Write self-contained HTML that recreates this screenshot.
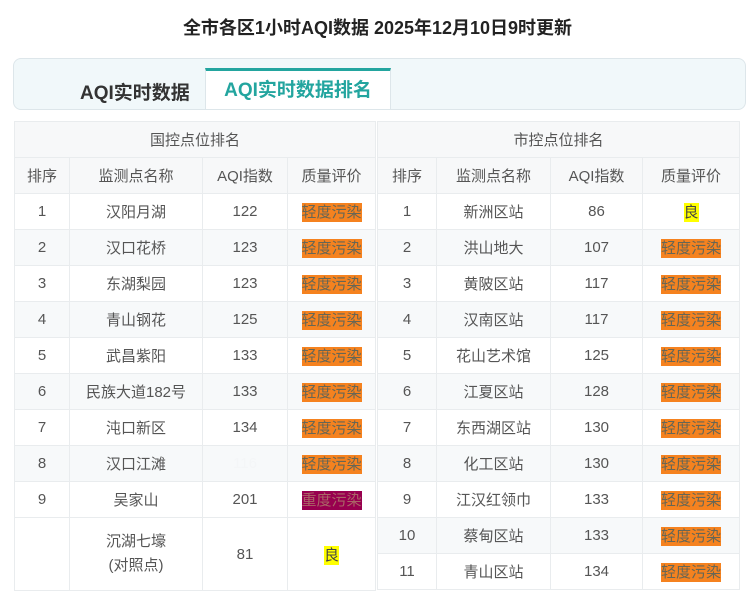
<!DOCTYPE html><html><head><meta charset="utf-8"><style>
body{margin:0;width:755px;height:564px;overflow:hidden;background:#fff;font-family:"Liberation Sans","Noto Sans CJK SC",sans-serif;}
h1{position:absolute;top:14px;left:0;width:755px;text-align:center;margin:0;font-size:18px;color:#222;font-weight:bold;}
.tabs{position:absolute;left:13px;top:58px;width:731px;height:50px;background:#f1f8fa;border:1px solid #dde6ea;border-radius:8px;}
.t1{position:absolute;left:66px;top:19px;font-size:19px;font-weight:bold;color:#333;}
.t2{position:absolute;left:191px;top:9px;width:186px;height:41px;background:#fff;border-top:3px solid #23a59f;border-left:1px solid #dde6ea;border-right:1px solid #dde6ea;box-sizing:border-box;text-align:center;font-size:19px;font-weight:bold;color:#23a59f;line-height:40px;}
table{position:absolute;top:121px;border-collapse:collapse;table-layout:fixed;font-size:15px;color:#555;}
td{border:1px solid #e9ecee;height:35px;padding:0;text-align:center;background:#fff;}
tr.h td{background:#f7f8f9;}
tr:nth-child(even):not(.h) td{background:#f7f9fa;}
.o{background:#f5821f;color:#665;padding:1px 0;}
.p{background:#98004f;color:#a66;padding:1px 0;}
.y{background:#ffff00;color:#444;padding:1px 0;}
</style></head><body>
<h1>全市各区1小时AQI数据 2025年12月10日9时更新</h1>
<div class="tabs"><div class="t1">AQI实时数据</div><div class="t2">AQI实时数据排名</div></div>
<table style="left:14px;width:361px">
<colgroup><col style="width:55px"><col style="width:133px"><col style="width:85px"><col style="width:88px"></colgroup>
<tr class="h"><td colspan="4">国控点位排名</td></tr>
<tr class="h"><td>排序</td><td>监测点名称</td><td>AQI指数</td><td>质量评价</td></tr>
<tr><td>1</td><td>汉阳月湖</td><td>122</td><td><span class="o">轻度污染</span></td></tr>
<tr><td>2</td><td>汉口花桥</td><td>123</td><td><span class="o">轻度污染</span></td></tr>
<tr><td>3</td><td>东湖梨园</td><td>123</td><td><span class="o">轻度污染</span></td></tr>
<tr><td>4</td><td>青山钢花</td><td>125</td><td><span class="o">轻度污染</span></td></tr>
<tr><td>5</td><td>武昌紫阳</td><td>133</td><td><span class="o">轻度污染</span></td></tr>
<tr><td>6</td><td>民族大道182号</td><td>133</td><td><span class="o">轻度污染</span></td></tr>
<tr><td>7</td><td>沌口新区</td><td>134</td><td><span class="o">轻度污染</span></td></tr>
<tr><td>8</td><td>汉口江滩</td><td style="color:#f4f6f7">116</td><td><span class="o">轻度污染</span></td></tr>
<tr><td>9</td><td>吴家山</td><td>201</td><td><span class="p">重度污染</span></td></tr>
<tr><td style="height:72px;background:#fff"></td><td style="background:#fff;line-height:24px">沉湖七壕<br>(对照点)</td><td style="background:#fff">81</td><td style="background:#fff"><span class="y">良</span></td></tr>
</table>
<table style="left:377px;width:362px">
<colgroup><col style="width:59px"><col style="width:114px"><col style="width:92px"><col style="width:97px"></colgroup>
<tr class="h"><td colspan="4">市控点位排名</td></tr>
<tr class="h"><td>排序</td><td>监测点名称</td><td>AQI指数</td><td>质量评价</td></tr>
<tr><td>1</td><td>新洲区站</td><td>86</td><td><span class="y">良</span></td></tr>
<tr><td>2</td><td>洪山地大</td><td>107</td><td><span class="o">轻度污染</span></td></tr>
<tr><td>3</td><td>黄陂区站</td><td>117</td><td><span class="o">轻度污染</span></td></tr>
<tr><td>4</td><td>汉南区站</td><td>117</td><td><span class="o">轻度污染</span></td></tr>
<tr><td>5</td><td>花山艺术馆</td><td>125</td><td><span class="o">轻度污染</span></td></tr>
<tr><td>6</td><td>江夏区站</td><td>128</td><td><span class="o">轻度污染</span></td></tr>
<tr><td>7</td><td>东西湖区站</td><td>130</td><td><span class="o">轻度污染</span></td></tr>
<tr><td>8</td><td>化工区站</td><td>130</td><td><span class="o">轻度污染</span></td></tr>
<tr><td>9</td><td>江汉红领巾</td><td>133</td><td><span class="o">轻度污染</span></td></tr>
<tr><td>10</td><td>蔡甸区站</td><td>133</td><td><span class="o">轻度污染</span></td></tr>
<tr><td>11</td><td>青山区站</td><td>134</td><td><span class="o">轻度污染</span></td></tr>
</table>
</body></html>
